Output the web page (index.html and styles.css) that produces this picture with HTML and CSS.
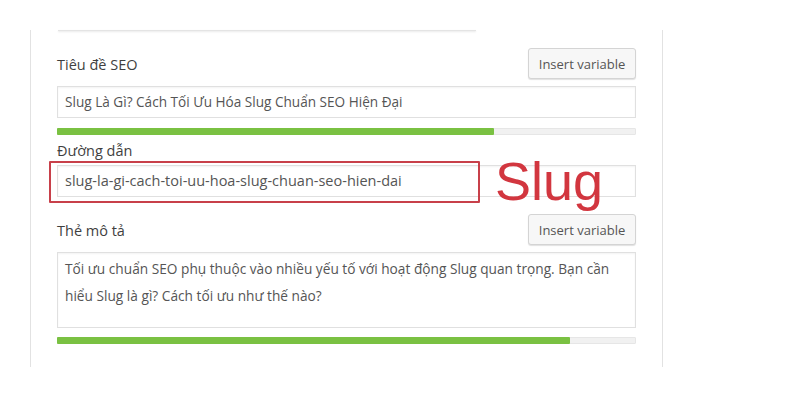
FILE: index.html
```html
<!DOCTYPE html>
<html lang="vi">
<head>
<meta charset="utf-8">
<title>SEO Slug</title>
<link rel="stylesheet" href="styles.css">
</head>
<body>
<div class="panel">
  <div class="topline"></div>

  <div class="field title-field">
    <div class="field-head">
      <span class="label">Tiêu đề SEO</span>
      <button class="btn">Insert variable</button>
    </div>
    <div class="input title-input">Slug Là Gì? Cách Tối Ưu Hóa Slug Chuẩn SEO Hiện Đại</div>
    <div class="progress"><div class="fill" style="width:75.8%"></div></div>
  </div>

  <div class="field slug-field">
    <div class="field-head plain">
      <span class="label">Đường dẫn</span>
    </div>
    <div class="input-wrap">
      <div class="input slug-input">slug-la-gi-cach-toi-uu-hoa-slug-chuan-seo-hien-dai</div>
      <div class="annot-box"></div>
      <div class="annot-text">Slug</div>
    </div>
  </div>

  <div class="field desc-field">
    <div class="field-head">
      <span class="label">Thẻ mô tả</span>
      <button class="btn">Insert variable</button>
    </div>
    <div class="textarea">Tối ưu chuẩn SEO phụ thuộc vào nhiều yếu tố với hoạt động Slug quan trọng. Bạn cần hiểu Slug là gì? Cách tối ưu như thế nào?</div>
    <div class="progress second"><div class="fill" style="width:88.9%"></div></div>
  </div>
</div>
</body>
</html>
```

FILE: styles.css
```css
* { box-sizing: border-box; }
html, body { margin: 0; padding: 0; background: #fff; }
body {
  font-family: "Open Sans", "Noto Sans", sans-serif;
  color: #444;
  width: 800px;
  height: 399px;
  overflow: hidden;
}
.panel {
  margin: 30px 0 0 30px;
  width: 633px;
  border-left: 1px solid #e2e2e2;
  border-right: 1px solid #e2e2e2;
  padding: 0 26px 23px 26px;
}
.topline {
  margin-left: 1px;
  width: 418px;
  height: 1px;
  background: #e4e4e4;
  box-shadow: 0 1px 2px rgba(0,0,0,0.12);
}
.field-head {
  display: flex;
  justify-content: space-between;
  align-items: flex-end;
}
.title-field .field-head { margin-top: 17px; }
.label {
  font-size: 14.5px;
  line-height: 20px;
  padding-bottom: 4px;
  color: #3f3f3f;
}
.plain .label { padding-bottom: 0; }
.btn {
  font-family: "Open Sans", "Noto Sans", sans-serif;
  font-size: 13px;
  color: #555;
  background: #f7f7f7;
  border: 1px solid #d4d4d4;
  border-radius: 3px;
  box-shadow: 0 1px 1px rgba(0,0,0,0.12);
  height: 31px;
  width: 108px;
  padding: 0;
  margin: 0;
}
.input {
  margin-top: 7px;
  height: 32px;
  border: 1px solid #e0e0e0;
  box-shadow: inset 0 1px 2px rgba(0,0,0,0.05);
  padding: 0 0 0 7px;
  font-size: 13px;
  line-height: 30px;
  color: #555;
  white-space: nowrap;
}
.title-input { font-size: 13.6px; }
.slug-input { font-size: 14.5px; }
.progress {
  margin-top: 10px;
  height: 7px;
  background: #f1f1f1;
  border: 1px solid #e6e6e6;
  border-radius: 1px;
}
.fill {
  background: #7ac142;
  margin: -1px 0 0 -1px;
  height: 7px;
  border-radius: 1px;
}
.slug-field { margin-top: 6px; }
.slug-field .input-wrap { position: relative; margin-top: 4px; }
.slug-field .input { margin-top: 0; }
.annot-box {
  position: absolute;
  left: -8px;
  top: -4px;
  width: 431px;
  height: 42px;
  border: 2px solid #c8404a;
  border-radius: 1px;
}
.annot-text {
  position: absolute;
  left: 438px;
  top: -12px;
  font-family: "Liberation Sans", Arial, sans-serif;
  font-size: 54px;
  line-height: 56px;
  color: #d2363f;
}
.desc-field .field-head { margin-top: 17px; }
.textarea {
  margin-top: 7px;
  height: 76px;
  border: 1px solid #e0e0e0;
  box-shadow: inset 0 1px 2px rgba(0,0,0,0.05);
  padding: 3px 4px 0 7px;
  font-size: 13.7px;
  line-height: 26.5px;
  color: #555;
}
.progress.second { margin-top: 9px; }
```
